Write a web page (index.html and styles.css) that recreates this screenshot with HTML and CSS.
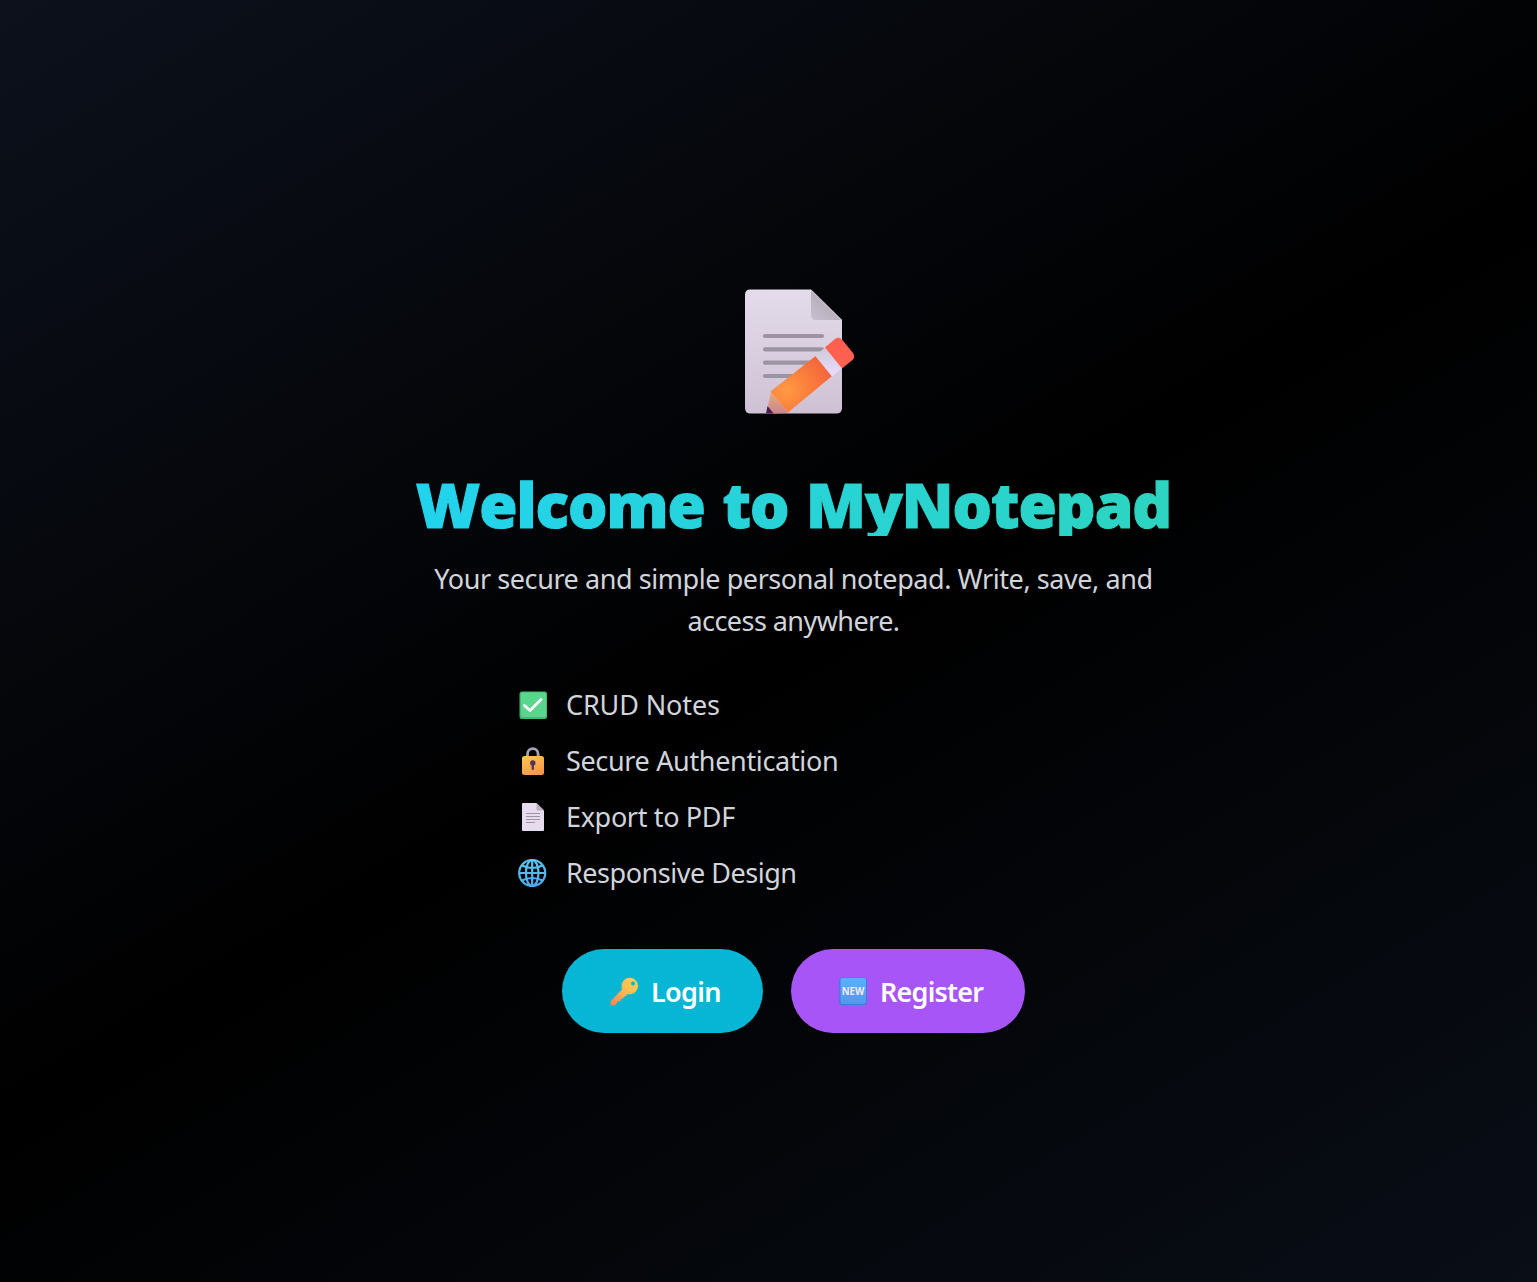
FILE: index.html
```html
<!DOCTYPE html>
<html lang="en">
<head>
<meta charset="utf-8">
<title>MyNotepad</title>
<link rel="stylesheet" href="styles.css">
</head>
<body>
<main class="welcome">
  <svg class="hero" viewBox="0 0 126 126" aria-hidden="true">
    <defs>
      <linearGradient id="paper" x1="0" y1="0" x2="0" y2="1"><stop offset="0" stop-color="#e4dcea"/><stop offset="1" stop-color="#cec1d4"/></linearGradient>
      <linearGradient id="fold" x1="0" y1="1" x2="1" y2="0"><stop offset="0" stop-color="#c9c0d0"/><stop offset=".45" stop-color="#b9b1bd"/><stop offset=".55" stop-color="#d8d1dc"/></linearGradient>
      <radialGradient id="wood" cx=".25" cy=".6" r=".75"><stop offset="0" stop-color="#ff9a43"/><stop offset=".5" stop-color="#fb7f3c"/><stop offset="1" stop-color="#f3663b"/></radialGradient>
      <linearGradient id="band" x1="0" y1="0" x2="0" y2="1"><stop offset="0" stop-color="#cfc9d8"/><stop offset="1" stop-color="#eadcff"/></linearGradient>
      <linearGradient id="tip" x1="0" y1="0" x2="0" y2="1"><stop offset="0" stop-color="#e4ad7d"/><stop offset="1" stop-color="#c9828d"/></linearGradient>
      <clipPath id="sheet"><path d="M0 0H126V124.500H0z"/></clipPath>
    </defs>
    <path fill="url(#paper)" d="M6 .5H67L98 31V119Q98 124.500 92 124.500H6.500Q1 124.500 1 119V6Q1 .5 6 .5z"/>
    <path fill="url(#fold)" d="M67 .5L98 31H72Q67 31 67 26z"/>
    <path stroke="#9c94a3" stroke-width="4.200" stroke-linecap="round" d="M21 47H78M21 60.300H78M21 73.700H68M21 87H60"/>
    <g clip-path="url(#sheet)">
      <path fill="url(#tip)" d="M27 103L44 123.500 22 126z"/>
      <path fill="#481b53" d="M23.500 117L30 125H22z"/>
      <path fill="url(#wood)" d="M26.500 102.500L71.500 67 88 87 44 123.500z"/>
      <path fill="url(#band)" d="M71.500 67L81 58.500 98 79 88 87.500z"/>
      <path fill="#ff6050" d="M81 58.500L91 50Q95 47.500 98 50.500L109 64Q111.500 68 108.500 71L98 79.500z"/>
    </g>
  </svg>
  <h1 class="title">Welcome to MyNotepad</h1>
  <p class="lead">Your secure and simple personal notepad. Write, save, and<br><span class="lead-end">access anywhere.</span></p>
  <ul class="features">
    <li>
      <svg class="icon" viewBox="0 0 30 30"><rect x="1.500" y="1.500" width="27.500" height="27.500" rx="2.500" fill="#45b978"/><rect x="3" y="2.500" width="25" height="24.500" rx="2" fill="#58d68d"/><path d="M6.500 15.500L12 20.500 23 9.500" fill="none" stroke="#fff4ff" stroke-width="3" stroke-linecap="round" stroke-linejoin="round"/></svg>
      <span class="notes">CRUD Notes</span>
    </li>
    <li>
      <svg class="icon" viewBox="0 0 30 30"><defs><linearGradient id="lock" x1="0" y1="0" x2=".5" y2="1"><stop stop-color="#ffc74f"/><stop offset="1" stop-color="#fa984d"/></linearGradient></defs><path d="M9.500 13V8a5.300 5.300 0 0 1 10.600 0v5" fill="none" stroke="#a9a1b4" stroke-width="2.800"/><rect x="4" y="10" width="22" height="19" rx="2.500" fill="url(#lock)"/><circle cx="14.800" cy="17" r="2.700" fill="#533557"/><path d="M14.800 18v5" stroke="#533557" stroke-width="2.300" stroke-linecap="round"/></svg>
      <span>Secure Authentication</span>
    </li>
    <li>
      <svg class="icon" viewBox="0 0 30 30"><path fill="#e6dced" d="M5 1H18.500L26 8.500V28Q26 29 25 29H5Q4 29 4 28V2Q4 1 5 1z"/><path fill="#b9b0c1" d="M18.500 1L26 8.500H19.500Q18.500 8.500 18.500 7.500z"/><path d="M8 11.500H22M8 14.500H22M8 17.500H22M8 20.500H17" stroke="#9d94a5" stroke-width="1.100"/></svg>
      <span>Export to PDF</span>
    </li>
    <li>
      <svg class="icon" viewBox="0 0 30 30"><defs><linearGradient id="globe" gradientUnits="userSpaceOnUse" x1="0" y1="2" x2="0" y2="28"><stop stop-color="#55c8f5"/><stop offset="1" stop-color="#4cabf2"/></linearGradient></defs><g fill="none" stroke="url(#globe)" stroke-width="2.200"><circle cx="14.200" cy="15" r="13"/><ellipse cx="14.200" cy="15" rx="6.300" ry="13"/><path d="M14.200 2V28M1.200 15H27.200M4 7.500Q14.200 12.500 24.400 7.500M4 22.500Q14.200 17.500 24.400 22.500"/></g></svg>
      <span class="responsive">Responsive Design</span>
    </li>
  </ul>
  <div class="actions">
    <a class="button login">
      <svg class="icon" viewBox="0 0 30 30"><defs><linearGradient id="key" x1="1" y1="0" x2="0" y2="1"><stop stop-color="#ffd94a"/><stop offset=".5" stop-color="#fcb654"/><stop offset="1" stop-color="#ef8354"/></linearGradient></defs><path transform="translate(0 .8)" fill="url(#key)" fill-rule="evenodd" d="M21 1a8.200 8.200 0 1 1-2 16.200L16.500 19.500 15 20 14.500 21.500 12 22 11.500 24 9 24.500 6.500 28Q4 30 2 28 .2 26 2 24L13.200 12.500A8.200 8.200 0 0 1 21 1zM24 4.600a2 2 0 1 0 .01 0z"/></svg>
      <span>Login</span>
    </a>
    <a class="button register">
      <svg class="icon" viewBox="0 0 30 30"><defs><linearGradient id="new" x1="0" y1="0" x2="0" y2="1"><stop stop-color="#59b0ff"/><stop offset="1" stop-color="#5298eb"/></linearGradient></defs><rect x="1.200" y="1.500" width="27.800" height="27.500" rx="2.500" fill="#397fd7"/><rect x="2.500" y="2" width="25.500" height="26" rx="2" fill="url(#new)"/><text class="badge" x="15" y="19" text-anchor="middle" textLength="22.500" lengthAdjust="spacingAndGlyphs">NEW</text></svg>
      <span>Register</span>
    </a>
  </div>
</main>
</body>
</html>
```
FILE: styles.css
```css
* { box-sizing: border-box; }
body {
  margin: 0;
  min-height: 1282px;
  background: linear-gradient(149deg, #0c111c 0%, #000 51%, #090e17 100%);
  font-family: "Noto Sans", "Open Sans", sans-serif;
  font-size: 28px;
  color: #d1d5db;
}
.welcome {
  display: flex;
  flex-direction: column;
  align-items: center;
  padding: 289px 0 0 50px;
}
.hero { display: block; width: 126px; height: 126px; margin-left: 26px; }
.title {
  width: 784px;
  margin: 58px 0 0;
  text-align: center;
  white-space: nowrap;
  font: 800 62px/63px "Open Sans", sans-serif;
  letter-spacing: -1px;
  word-spacing: 2.500px;
  color: transparent;
  -webkit-text-stroke: 1.200px transparent;
  background: linear-gradient(to right, #22d3ee, #2dd4bf);
  -webkit-background-clip: text;
  background-clip: text;
}
.lead {
  margin: 22px 0 0;
  line-height: 42px;
  text-align: center;
  white-space: nowrap;
  font-size: 27px;
  letter-spacing: -0.430px;
}
.lead-end { letter-spacing: -0.560px; }
.features {
  display: grid;
  gap: 14px;
  width: 553px;
  margin: 42px 0 0;
  padding: 0 0 0 1px;
  list-style: none;
  line-height: 42px;
  font-size: 27px;
  letter-spacing: -0.340px;
}
.features li { display: flex; align-items: center; gap: 18px; }
.notes { letter-spacing: -0.120px; }
.responsive { letter-spacing: -0.470px; }
.icon { flex: none; width: 30px; height: 30px; }
.actions { display: flex; gap: 28px; margin-top: 55px; }
.button {
  display: flex;
  align-items: center;
  height: 84px;
  padding-left: 47px;
  gap: 12px;
  border-radius: 42px;
  color: #fff;
  font-weight: 600;
  font-size: 27px;
}
.login { width: 201px; background: #06b6d4; letter-spacing: -0.650px; }
.register { width: 234px; background: #a855f7; letter-spacing: -0.800px; }
.badge { font: 700 10.500px "Open Sans", sans-serif; letter-spacing: 0; fill: #f5eaff; }
```
